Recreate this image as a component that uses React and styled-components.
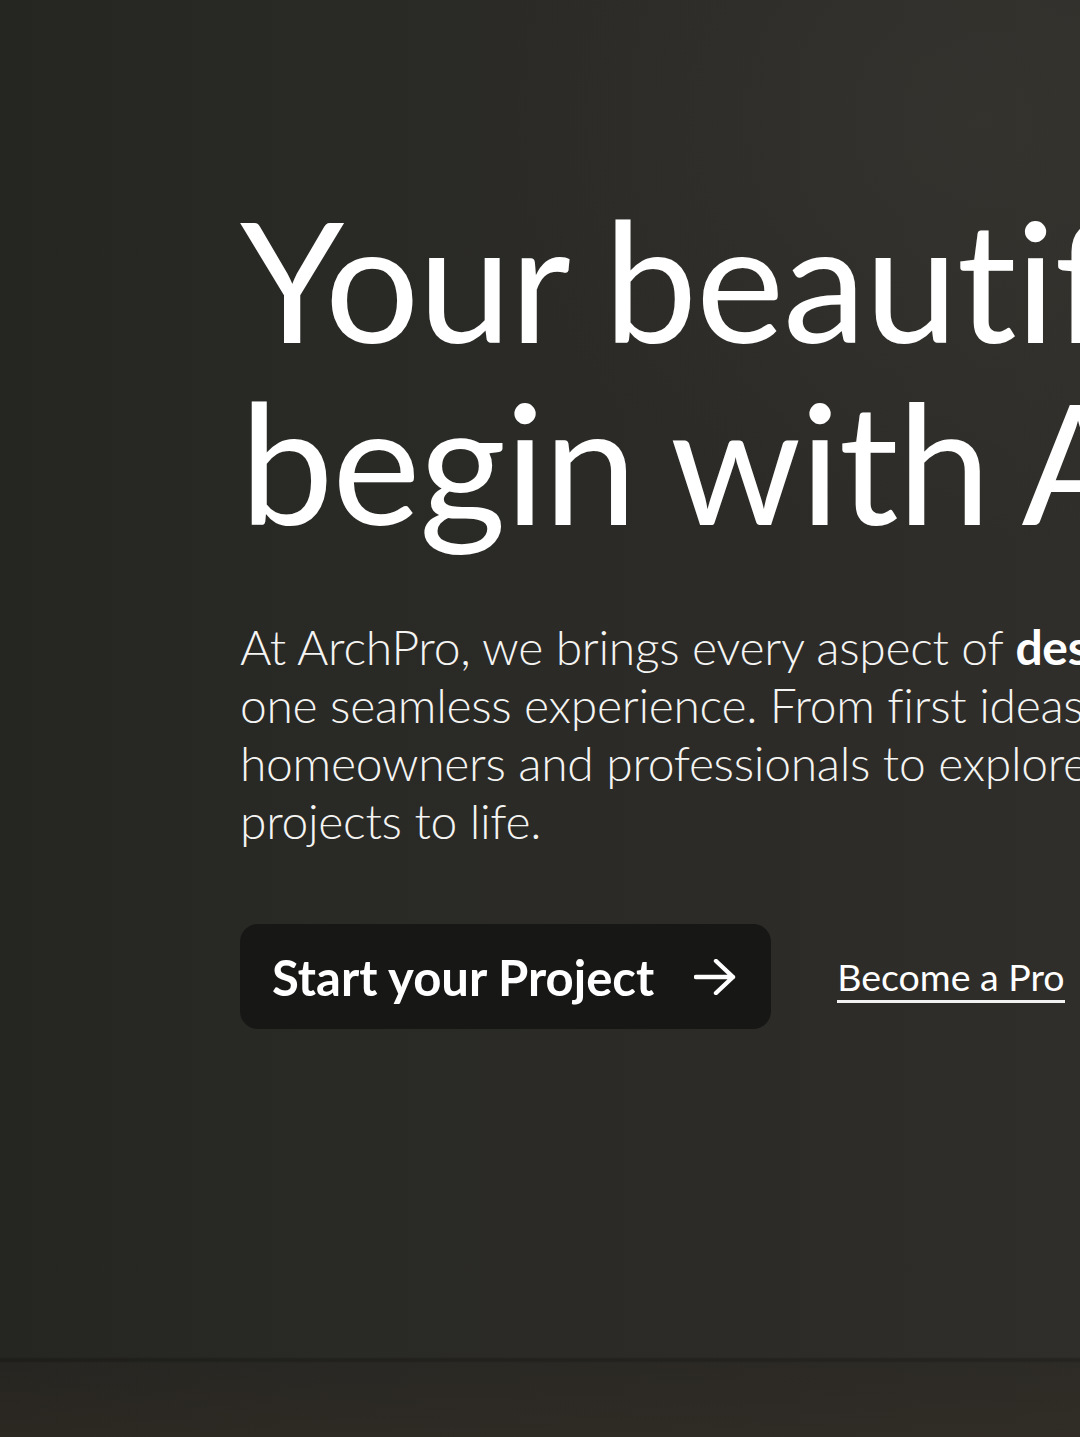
import React from "react";
import styled, { createGlobalStyle } from "styled-components";

const GlobalStyle = createGlobalStyle`
  html, body {
    margin: 0;
    padding: 0;
    background: #2a2926;
    overflow: hidden;
  }
  * {
    box-sizing: border-box;
  }
`;

const ArrowIcon = () => (
  <svg width="42" height="36" viewBox="0 0 42 36" fill="none">
    <path
      d="M2 18H39M22 2L39 18L22 34"
      stroke="#fff"
      strokeWidth="4.4"
      strokeLinecap="round"
      strokeLinejoin="round"
    />
  </svg>
);

const App = () => {
  return (
    <>
      <GlobalStyle />
      <Hero>
        <Content>
          <Heading>
            <Line>Your beautiful spaces</Line>
            <Line>begin with ArchPro</Line>
          </Heading>
          <Lead>
            <Line>
              At ArchPro, we brings every aspect of <strong>design, build and living</strong> into
            </Line>
            <Line>one seamless experience. From first ideas to finished homes, we connect</Line>
            <Line>homeowners and professionals to explore, collaborate and bring their</Line>
            <Line>projects to life.</Line>
          </Lead>
          <Actions>
            <PrimaryButton>
              Start your Project
              <ArrowIcon />
            </PrimaryButton>
            <TextLink href="#">Become a Pro</TextLink>
          </Actions>
        </Content>
      </Hero>
    </>
  );
};

const Hero = styled.section`
  position: relative;
  width: 100%;
  min-height: 1437px;
  overflow: hidden;
  font-family: "Lato", "Open Sans", sans-serif;
  color: #fff;
  background:
    linear-gradient(
      180deg,
      transparent 1357px,
      rgba(14, 13, 10, 0.3) 1359px,
      rgba(14, 13, 10, 0.3) 1361px,
      rgba(42, 37, 30, 0.3) 1363px,
      rgba(50, 43, 34, 0.5) 100%
    ),
    radial-gradient(
      ellipse 700px 600px at 980px 120px,
      rgba(58, 56, 50, 0.5),
      transparent 70%
    ),
    linear-gradient(90deg, #252522 0%, #292926 30%, #2c2b28 70%, #2f2e2a 100%);
`;

const Content = styled.div`
  padding: 188px 0 0 240px;
  display: flex;
  flex-direction: column;
`;

const Line = styled.span`
  display: block;
  white-space: nowrap;
`;

const Heading = styled.h1`
  margin: 0;
  font-size: 167px;
  line-height: 182px;
  font-weight: 400;
  letter-spacing: -1.2px;
  word-spacing: -4px;
  color: #fff;
`;

const Lead = styled.p`
  margin: 66px 0 0;
  font-size: 48px;
  line-height: 58px;
  font-weight: 300;
  letter-spacing: -0.3px;
  color: #f4f4f2;

  strong {
    font-weight: 700;
    color: #fff;
  }
`;

const Actions = styled.div`
  margin-top: 74px;
  display: flex;
  align-items: center;
  gap: 66px;
`;

const PrimaryButton = styled.button`
  display: flex;
  align-items: center;
  gap: 40px;
  height: 105px;
  padding: 0 35px 0 32px;
  border: none;
  border-radius: 18px;
  background: #171716;
  color: #fff;
  font-family: "Lato", sans-serif;
  font-size: 49px;
  font-weight: 700;
  cursor: pointer;
`;

const TextLink = styled.a`
  display: inline-block;
  font-size: 37.5px;
  line-height: 46px;
  font-weight: 400;
  color: #fff;
  text-decoration: none;
  border-bottom: 3px solid #f2f2f2;
  margin-top: 4px;
`;

export default App;
